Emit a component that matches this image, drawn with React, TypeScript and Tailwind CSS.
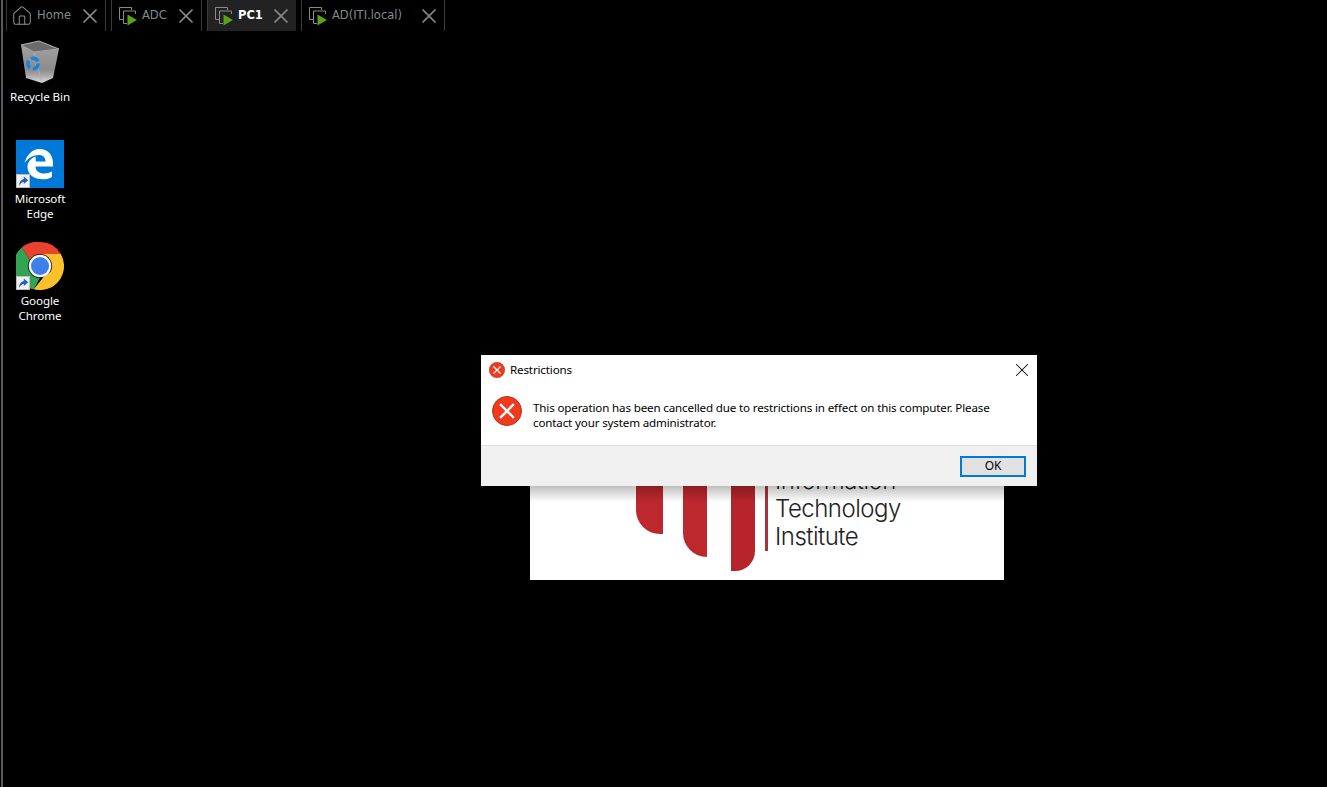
import React from 'react';
import { House, X } from 'lucide-react';

const SessionIcon: React.FC = () => (
  <svg width="20" height="20" viewBox="0 0 20 20" className="shrink-0">
    <path d="M5.5 13.5H1.5V1.5H13.5V4" fill="none" stroke="#8a8a8a" strokeWidth="1" />
    <path d="M9 17.5H5.5V5H17.5V8" fill="none" stroke="#8a8a8a" strokeWidth="1" />
    <path d="M9.5 8.5L19 14L9.5 19.5Z" fill="#5aa316" />
  </svg>
);

const ErrorIcon: React.FC<{ size: number }> = ({ size }) => (
  <svg width={size} height={size} viewBox="0 0 30 30" className="shrink-0">
    <circle cx="15" cy="15" r="14.5" fill="#ef3b1d" stroke="#b3321a" strokeWidth="1" />
    <path d="M9 9L21 21M21 9L9 21" stroke="#fff" strokeWidth="2.4" strokeLinecap="square" />
  </svg>
);

const ShortcutBadge: React.FC = () => (
  <svg width="14" height="14" viewBox="0 0 14 14" className="absolute left-0 bottom-0">
    <rect x="0.5" y="0.5" width="13" height="13" fill="#f1f1f1" stroke="#bdbdbd" />
    <path d="M3 12C3 8 5 5.8 7.8 5V2.5L12.2 6.2L7.8 10V7.8C6 8.2 4.5 9.5 3 12Z" fill="#1f5fb4" />
  </svg>
);

const RecycleBin: React.FC = () => (
  <svg width="40" height="44" viewBox="0 0 40 44" className="mb-[2px]">
    <defs>
      <linearGradient id="binBody" x1="0" y1="0" x2="0" y2="1">
        <stop offset="0" stopColor="#a0a0a0" />
        <stop offset="0.65" stopColor="#8c8c8c" />
        <stop offset="0.8" stopColor="#a8a8a8" />
        <stop offset="1" stopColor="#dcdcdc" />
      </linearGradient>
    </defs>
    <path d="M1 5L19 1L39 9L14 12Z" fill="#6b6b6b" stroke="#b5b5b5" strokeWidth="1" />
    <path d="M1 5L14 12L39 9L33 38L22 43L6 38Z" fill="url(#binBody)" />
    <path d="M14 12L22 43" stroke="#b0b0b0" strokeWidth="0.7" fill="none" />
    <circle cx="13" cy="23.5" r="5.2" fill="none" stroke="#1583e6" strokeWidth="3.6" strokeDasharray="8 2.9" />
  </svg>
);

const EdgeLogo: React.FC = () => (
  <svg width="48" height="48" viewBox="0 0 48 48" className="block">
    <rect width="48" height="48" fill="#0078d7" />
    <path
      d="M8.5 23C11 14 17 9 23 9C32 9 37 15 37 23V26.5H19.5C19.5 31 23.5 33.5 28 33.5C31 33.5 33.5 32.8 36 31.5V37C33.5 38.5 30.5 39.3 27 39.3C18 39.3 11.5 34.5 11.5 27C11.5 22.5 14.5 18.5 19.5 16.5C19.8 18.5 19.8 20 19.8 21.5H29.5C29.5 17.5 27 15 23 15C17 15 12 18 8.5 23Z"
      fill="#fff"
    />
  </svg>
);

const ChromeLogo: React.FC = () => (
  <svg width="48" height="48" viewBox="0 0 48 48" className="block">
    <path d="M24 0A24 24 0 0 1 44.8 12H24A12 12 0 0 0 13.6 18L6 5.2A24 24 0 0 1 24 0Z" fill="#e8432f" />
    <path d="M6 5.2L13.6 18A12 12 0 0 0 24 36L17.7 47.2A24 24 0 0 1 6 5.2Z" fill="#32a353" />
    <path d="M44.8 12A24 24 0 0 1 17.7 47.2L28 34.4 34.4 30A12 12 0 0 0 24 12Z" fill="#fbc02d" />
    <circle cx="24" cy="24" r="11.3" fill="#f4f4f4" />
    <circle cx="24" cy="24" r="9" fill="#3f7fe8" />
  </svg>
);

const Tab: React.FC<{ label: string; home?: boolean; active?: boolean; width: string }> = ({
  label,
  home,
  active,
  width,
}) => (
  <div
    className={`flex items-center h-[31px] pl-[6px] pr-[3px] border-l border-[#3a3a3a] ${width} ${active ? 'bg-[#222222]' : 'border-r'}`}
  >
    {home ? (
      <House size={22} strokeWidth={1.1} className="text-[#8f8f8f] shrink-0 ml-[-2px]" />
    ) : (
      <SessionIcon />
    )}
    <span className={`ml-[4px] text-[11.5px] ${active ? 'font-bold text-white' : 'text-[#7f8c8d]'}`}>{label}</span>
    <X size={24} strokeWidth={1.7} className="text-[#8a8a8a] ml-auto shrink-0" />
  </div>
);

const DesktopIcon: React.FC<{ label: string; top: string; children: React.ReactNode }> = ({ label, top, children }) => (
  <div className={`absolute left-[2px] w-[76px] flex flex-col items-center ${top}`}>
    <div className="relative">{children}</div>
    <span className="mt-[3px] text-[11.6px] leading-[15px] tracking-[-0.1px] text-white text-center font-['Noto_Sans',sans-serif] w-[66px]">
      {label}
    </span>
  </div>
);

export default function App() {
  return (
    <div className="relative w-[1327px] h-[787px] overflow-hidden bg-black font-['Liberation_Sans',sans-serif]">
      <div className="absolute left-[1px] top-0 bottom-0 w-[2px] bg-[#5a5a5a]" />

      {/* Tab strip */}
      <div className="relative z-10 flex gap-[5px] pl-[6px] font-['DejaVu_Sans',sans-serif]">
        <Tab label="Home" home width="w-[100px]" />
        <Tab label="ADC" width="w-[91px]" />
        <Tab label="PC1" active width="w-[89px]" />
        <Tab label="AD(ITI.local)" width="w-[144px]" />
      </div>

      {/* Desktop icons */}
      <DesktopIcon label="Recycle Bin" top="top-[40px]">
        <RecycleBin />
      </DesktopIcon>
      <DesktopIcon label="Microsoft Edge" top="top-[140px]">
        <EdgeLogo />
        <ShortcutBadge />
      </DesktopIcon>
      <DesktopIcon label="Google Chrome" top="top-[242px]">
        <ChromeLogo />
        <ShortcutBadge />
      </DesktopIcon>

      {/* Wallpaper logo, mostly hidden by the dialog */}
      <div className="absolute left-[530px] top-[460px] w-[474px] h-[120px] bg-white overflow-hidden">
        <div className="absolute left-[106px] top-0 w-[27px] h-[74px] rounded-bl-[24px] bg-[#bd272e]" />
        <div className="absolute left-[153px] top-0 w-[24px] h-[97px] rounded-bl-[24px] bg-[#bd272e]" />
        <div className="absolute left-[201px] top-0 w-[24px] h-[111px] rounded-br-[20px] bg-[#b5252b]" />
        <div className="absolute left-[235px] top-0 w-[3px] h-[91px] bg-[#a8323a]" />
        <div className="absolute left-[245px] top-[7px] text-[24px] leading-[28px] tracking-[-0.5px] font-light text-[#222222] font-['Inter',sans-serif]">
          <div>Information</div>
          <div>Technology</div>
          <div>Institute</div>
        </div>
        <div className="absolute left-0 right-0 top-[26px] h-[16px] bg-gradient-to-b from-black/25 to-transparent" />
      </div>

      {/* Error dialog */}
      <div className="absolute left-[481px] top-[355px] w-[556px] h-[131px] bg-white flex flex-col font-['Noto_Sans',sans-serif] text-[11.6px] tracking-[-0.15px] text-[#000000]">
        <div className="flex items-center h-[29px] pl-[8px] pr-[4px]">
          <ErrorIcon size={16} />
          <span className="ml-[5px]">Restrictions</span>
          <X size={22} strokeWidth={1.1} className="ml-auto text-black" />
        </div>
        <div className="flex-1 flex pl-[11px] pr-[30px] pt-[12px]">
          <ErrorIcon size={30} />
          <p className="ml-[11px] pt-[4px] leading-[15px]">
            This operation has been cancelled due to restrictions in effect on this computer. Please contact your system
            administrator.
          </p>
        </div>
        <div className="h-[41px] flex items-center justify-end pr-[11px] bg-[#f0f0f0] border-t border-[#dfdfdf]">
          <button className="w-[66px] h-[21px] border-2 border-[#0078d7] bg-[#e1e1e1] text-[12px] leading-none">OK</button>
        </div>
      </div>
    </div>
  );
}
